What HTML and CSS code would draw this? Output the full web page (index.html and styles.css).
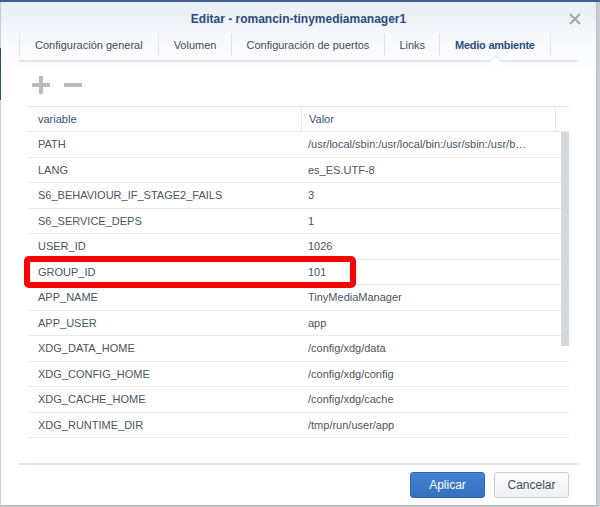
FILE: index.html
```html
<!DOCTYPE html>
<html lang="es">
<head>
<meta charset="utf-8">
<title>Editar - romancin-tinymediamanager1</title>
<link rel="stylesheet" href="styles.css">
</head>
<body>
<div class="dialog">
  <div class="titlebar">
    <div class="title">Editar - romancin-tinymediamanager1</div>
    <svg class="close" width="14" height="14" viewBox="0 0 14 14"><path d="M2 2 L12 12 M12 2 L2 12" stroke="#a3a7ab" stroke-width="2" fill="none"/></svg>
  </div>
  <div class="tabs">
    <div class="tab">Configuración general</div>
    <div class="tab">Volumen</div>
    <div class="tab">Configuración de puertos</div>
    <div class="tab">Links</div>
    <div class="tab active">Medio ambiente</div>
  </div>
  <div class="toolbar">
    <svg class="tool" width="20" height="20" viewBox="0 0 20 20"><path d="M1 10 H19 M10 1 V19" stroke="#b6bbc1" stroke-width="4" fill="none"/></svg>
    <svg class="tool" width="20" height="20" viewBox="0 0 20 20"><path d="M1 10 H19" stroke="#b6bbc1" stroke-width="4" fill="none"/></svg>
  </div>
  <div class="grid">
    <div class="row head">
      <div class="c1">variable</div>
      <div class="c2">Valor</div>
      <div class="c3"></div>
    </div>
    <div class="body">
      <div class="row"><div class="c1">PATH</div><div class="c2">/usr/local/sbin:/usr/local/bin:/usr/sbin:/usr/b…</div></div>
      <div class="row"><div class="c1">LANG</div><div class="c2">es_ES.UTF-8</div></div>
      <div class="row"><div class="c1">S6_BEHAVIOUR_IF_STAGE2_FAILS</div><div class="c2">3</div></div>
      <div class="row"><div class="c1">S6_SERVICE_DEPS</div><div class="c2">1</div></div>
      <div class="row"><div class="c1">USER_ID</div><div class="c2">1026</div></div>
      <div class="row"><div class="c1">GROUP_ID</div><div class="c2">101</div><div class="mark"></div></div>
      <div class="row"><div class="c1">APP_NAME</div><div class="c2">TinyMediaManager</div></div>
      <div class="row"><div class="c1">APP_USER</div><div class="c2">app</div></div>
      <div class="row"><div class="c1">XDG_DATA_HOME</div><div class="c2">/config/xdg/data</div></div>
      <div class="row"><div class="c1">XDG_CONFIG_HOME</div><div class="c2">/config/xdg/config</div></div>
      <div class="row"><div class="c1">XDG_CACHE_HOME</div><div class="c2">/config/xdg/cache</div></div>
      <div class="row"><div class="c1">XDG_RUNTIME_DIR</div><div class="c2">/tmp/run/user/app</div></div>
      <div class="scroll"></div>
    </div>
  </div>
  <div class="footer">
    <button class="btn primary">Aplicar</button>
    <button class="btn">Cancelar</button>
  </div>
</div>
</body>
</html>
```
FILE: styles.css
```css
* { box-sizing: border-box; }
html, body { margin: 0; height: 100%; }
body {
  width: 600px;
  height: 507px;
  overflow: hidden;
  padding: 2px 0 0 1px;
  font-family: "Liberation Sans", Arial, sans-serif;
  font-size: 11px;
  color: #4a5561;
  background:
    linear-gradient(#3f5f90, #3f5f90) 0 0 / 600px 2px no-repeat,
    linear-gradient(#2c4f86, #2c4f86) 0 48px / 2px 52px no-repeat,
    #c9cdd2;
}
.dialog {
  width: 596px;
  height: 504px;
  background: linear-gradient(#e7edf4 0, #f6f8fb 34px, #ffffff 70px);
  border-right: 1px solid #b9bec4;
  border-bottom: 1px solid #b0b4b9;
  display: flex;
  flex-direction: column;
}
.titlebar {
  height: 31px;
  display: flex;
  align-items: center;
  justify-content: center;
  position: relative;
}
.title {
  font-size: 12px;
  font-weight: bold;
  color: #2a4a7c;
  margin-top: 2px;
}
.close {
  position: absolute;
  right: 14px;
  top: 10px;
}
.tabs {
  margin: 0 18px 0 18px;
  height: 29px;
  display: flex;
  border-bottom: 2px solid #e2e6ec;
  position: relative;
}
.tab {
  padding: 0 15px;
  display: flex;
  align-items: center;
  border-left: 1px solid #dfe3e8;
  height: 23px;
  margin-top: 0;
  color: #3f4b58;
}
.tab:nth-child(3) { padding: 0 15px 0 14px; }
.tab:nth-child(4) { padding: 0 14px; }
.tab.active {
  color: #2c4d83;
  font-weight: bold;
  letter-spacing: -0.25px;
  border-right: 1px solid #dfe3e8;
  position: relative;
}
.tab.active::after {
  content: "";
  position: absolute;
  left: 50%;
  bottom: -10px;
  width: 8px;
  height: 8px;
  margin-left: -4px;
  background: #fff;
  border-left: 1px solid #e2e6ec;
  border-top: 1px solid #e2e6ec;
  transform: rotate(45deg);
}
.toolbar {
  height: 44px;
  display: flex;
  align-items: center;
  gap: 12px;
  padding-left: 30px;
  padding-top: 2px;
}
.grid {
  margin-left: 27px;
  width: 541px;
  border-top: 1px solid #e3e7ec;
}
.row {
  display: flex;
  height: 25.5px;
  border-bottom: 1px solid #e6eaef;
  align-items: center;
  position: relative;
}
.row.head {
  height: 25px;
  color: #34507d;
  border-bottom: 1px solid #e3e7ec;
}
.c1 {
  width: 273px;
  padding-left: 10px;
  white-space: nowrap;
}
.c2 {
  width: 254px;
  padding-left: 7px;
  white-space: nowrap;
}
.head .c1, .head .c2, .head .c3 { height: 100%; display: flex; align-items: center; }
.head .c2 { border-left: 1px solid #e3e7ec; }
.head .c3 { border-left: 1px solid #e3e7ec; width: 14px; }
.body { position: relative; }
.scroll {
  position: absolute;
  right: 0;
  top: 0;
  width: 8px;
  height: 214px;
  background: #d6d8db;
}
.mark {
  position: absolute;
  left: -4px;
  top: -4px;
  width: 332px;
  height: 32px;
  border: 6px solid #ff0000;
  border-radius: 5px;
}
.footer {
  margin: 25px 18px 0 18px;
  border-top: 2px solid #e2e6ec;
  display: flex;
  justify-content: flex-end;
  gap: 9px;
  padding: 7px 9px 0 0;
}
.btn {
  width: 75px;
  height: 26px;
  font-family: "Liberation Sans", Arial, sans-serif;
  font-size: 12px;
  border-radius: 3px;
  border: 1px solid #c9cdd3;
  background: linear-gradient(#fbfcfd, #eef1f4);
  color: #3d4a57;
}
.btn.primary {
  border: 1px solid #2f65b0;
  background: linear-gradient(#4582d2, #3570c0);
  color: #ffffff;
}
```
